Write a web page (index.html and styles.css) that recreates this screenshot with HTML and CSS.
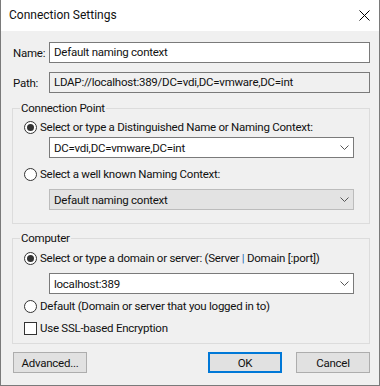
FILE: index.html
```html
<!DOCTYPE html>
<html lang="en">
<head>
  <meta charset="UTF-8">
  <meta name="viewport" content="width=device-width, initial-scale=1.0">
  <title>Connection Settings</title>
  <link rel="stylesheet" href="styles.css">
</head>
<body>
  <div class="window">
    <div class="title-bar">
      <span class="title">Connection Settings</span>
      <svg class="close" width="11" height="11" viewBox="0 0 11 11">
        <path d="M0.5 0.5 L10.5 10.5 M10.5 0.5 L0.5 10.5" stroke="#000" stroke-width="1" fill="none"/>
      </svg>
    </div>

    <div class="dialog">
      <div class="field-row first">
        <label class="field-label">Name:</label>
        <div class="edit">Default naming context</div>
      </div>
      <div class="field-row second">
        <label class="field-label">Path:</label>
        <div class="edit readonly">LDAP://localhost:389/DC=vdi,DC=vmware,DC=int</div>
      </div>

      <div class="group group-connection">
        <span class="group-title">Connection Point</span>
        <div class="option opt-1">
          <span class="radio checked"></span>
          <span class="option-text">Select or type a Distinguished Name or Naming Context:</span>
        </div>
        <div class="combo combo-1">
          <span>DC=vdi,DC=vmware,DC=int</span>
          <svg class="chevron" width="9" height="5" viewBox="0 0 9 5"><path d="M0.5 0.5 L4.5 4.5 L8.5 0.5" stroke="#555" fill="none"/></svg>
        </div>
        <div class="option opt-2">
          <span class="radio"></span>
          <span class="option-text">Select a well known Naming Context:</span>
        </div>
        <div class="combo combo-2 disabled">
          <span>Default naming context</span>
          <svg class="chevron" width="9" height="5" viewBox="0 0 9 5"><path d="M0.5 0.5 L4.5 4.5 L8.5 0.5" stroke="#555" fill="none"/></svg>
        </div>
      </div>

      <div class="group group-computer">
        <span class="group-title">Computer</span>
        <div class="option opt-3">
          <span class="radio checked"></span>
          <span class="option-text">Select or type a domain or server: (Server <span class="pipe">|</span> Domain [:port])</span>
        </div>
        <div class="combo combo-3">
          <span>localhost:389</span>
          <svg class="chevron" width="9" height="5" viewBox="0 0 9 5"><path d="M0.5 0.5 L4.5 4.5 L8.5 0.5" stroke="#555" fill="none"/></svg>
        </div>
        <div class="option opt-4">
          <span class="radio"></span>
          <span class="option-text">Default (Domain or server that you logged in to)</span>
        </div>
        <div class="option opt-5">
          <span class="checkbox"></span>
          <span class="option-text">Use SSL-based Encryption</span>
        </div>
      </div>

      <div class="button-row">
        <button class="btn">Advanced...</button>
        <div class="button-pair">
          <button class="btn default">OK</button>
          <button class="btn">Cancel</button>
        </div>
      </div>
    </div>
  </div>
</body>
</html>
```

FILE: styles.css
```css
* {
  box-sizing: border-box;
  margin: 0;
  padding: 0;
  font-family: Roboto, 'Noto Sans', sans-serif;
  letter-spacing: -0.25px;
}

body {
  font-size: 11.5px;
  color: #111;
  background: #f0f0f0;
}

.window {
  width: 380px;
  height: 386px;
  background: #f0f0f0;
  border: 1px solid #7a7a7a;
  border-top: none;
  display: flex;
  flex-direction: column;
}

.title-bar {
  height: 31px;
  background: #fff;
  display: flex;
  align-items: center;
  justify-content: space-between;
  padding: 0 9px 0 8px;
}

.title {
  font-size: 12px;
  letter-spacing: 0;
  line-height: 16px;
  margin-top: -1px;
}

.close {
  display: block;
  margin-top: -1px;
}

.dialog {
  padding: 0 9px 0 11px;
}

.field-row {
  display: flex;
  align-items: center;
  height: 21px;
}

.field-row.first {
  margin-top: 11px;
}

.field-row.second {
  margin-top: 9px;
}

.field-label {
  width: 37px;
  flex-shrink: 0;
  padding-left: 1px;
}

.edit {
  flex: 1;
  height: 21px;
  line-height: 19px;
  border: 1px solid #7a7a7a;
  background: #fff;
  padding-left: 4px;
  white-space: nowrap;
  overflow: hidden;
}

.edit.readonly {
  background: #f0f0f0;
}

.group {
  position: relative;
  border: 1px solid #dcdcdc;
}

.group-title {
  position: absolute;
  top: -9px;
  left: 7px;
  padding: 0 1px;
  line-height: 16px;
  background: #f0f0f0;
}

.group-connection {
  margin-top: 15px;
  height: 116px;
  padding-top: 10px;
}

.group-computer {
  margin-top: 14px;
  height: 106px;
  padding-top: 11px;
}

.option {
  display: flex;
  align-items: center;
  height: 16px;
  padding-left: 11px;
}

.option-text {
  margin-left: 3px;
  white-space: nowrap;
}

.pipe {
  color: #2a6bb5;
}

.radio {
  width: 13px;
  height: 13px;
  border: 1px solid #333;
  border-radius: 50%;
  background: #fff;
  display: flex;
  align-items: center;
  justify-content: center;
  flex-shrink: 0;
}

.radio.checked::after {
  content: '';
  width: 7px;
  height: 7px;
  border-radius: 50%;
  background: #333;
}

.checkbox {
  width: 13px;
  height: 13px;
  border: 1px solid #333;
  background: #fff;
  flex-shrink: 0;
}

.combo {
  display: flex;
  align-items: center;
  justify-content: space-between;
  width: 305px;
  height: 21px;
  margin-left: 36px;
  border: 1px solid #7a7a7a;
  background: #fff;
  padding: 0 4px 0 4px;
  white-space: nowrap;
}

.combo.disabled {
  background: #e3e3e3;
  border-color: #bcbcbc;
}

.chevron {
  display: block;
}

.combo-1 { margin-top: 2px; }
.opt-2 { margin-top: 8px; }
.combo-2 { margin-top: 7px; }
.combo-3 { margin-top: 7px; }
.opt-4 { margin-top: 4px; }
.opt-5 { margin-top: 6px; }

.button-row {
  display: flex;
  justify-content: space-between;
  margin-top: 8px;
  padding-left: 1px;
}

.button-pair {
  display: flex;
  gap: 14px;
}

.btn {
  width: 74px;
  height: 21px;
  border: 1px solid #adadad;
  background: #e1e1e1;
  font-size: 11.5px;
  color: #111;
}

.btn.default {
  border: 2px solid #0078d7;
}
```
